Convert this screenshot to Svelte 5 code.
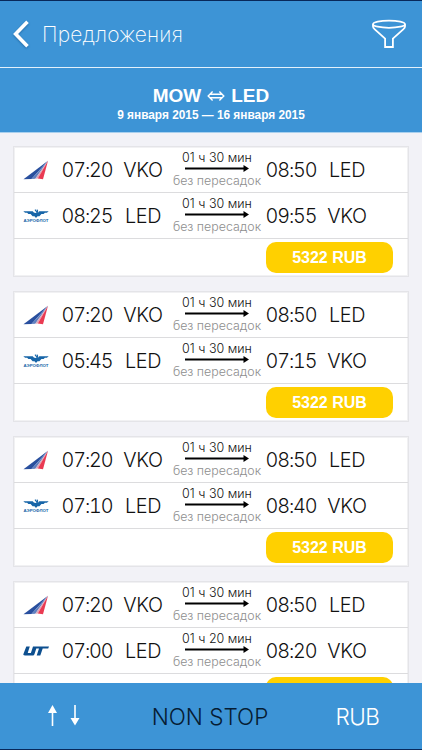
<script lang="ts">
  type Leg = {
    airline: "vnukovo" | "aeroflot" | "utair";
    depart: string;
    from: string;
    arrive: string;
    to: string;
    duration: string;
  };

  const outbound: Leg = {
    airline: "vnukovo",
    depart: "07:20",
    from: "VKO",
    arrive: "08:50",
    to: "LED",
    duration: "01 ч 30 мин"
  };

  function back(airline: Leg["airline"], depart: string, arrive: string, duration = "01 ч 30 мин"): Leg {
    return { airline, depart, from: "LED", arrive, to: "VKO", duration };
  }

  const offers = [
    { price: "5322 RUB", legs: [outbound, back("aeroflot", "08:25", "09:55")] },
    { price: "5322 RUB", legs: [outbound, back("aeroflot", "05:45", "07:15")] },
    { price: "5322 RUB", legs: [outbound, back("aeroflot", "07:10", "08:40")] },
    { price: "5322 RUB", legs: [outbound, back("utair", "07:00", "08:20", "01 ч 20 мин")] }
  ];
</script>

<div class="screen">
  <header class="navbar">
    <button class="back" aria-label="Назад">
      <svg width="16" height="28" viewBox="0 0 16 28">
        <path d="M14.5 1.8 2.6 14l11.9 12.2" fill="none" stroke="#fff" stroke-width="3.6" />
      </svg>
    </button>
    <h1>Предложения</h1>
    <button class="filter" aria-label="Фильтр">
      <svg width="36" height="30" viewBox="0 0 36 30" fill="none" stroke="#fff" stroke-width="1.8">
        <ellipse cx="18" cy="5.2" rx="16" ry="3.6" />
        <path d="M2 5.2v2.3c0 1.2.7 2 1.8 2.9l10.3 9.2V28h7.8v-8.4l10.3-9.2c1.1-.9 1.800-1.700 1.800-2.900V5.200" />
      </svg>
    </button>
  </header>

  <section class="route">
    <div class="cities">
      <span>MOW</span>
      <svg width="18" height="12" viewBox="0 0 18 12" fill="none" stroke="#fff" stroke-width="1.4">
        <path d="M3.2 4.2h11.6M3.2 7.8h11.6M5.6 1.5 1.2 6l4.400 4.500M12.400 1.500 16.800 6l-4.400 4.500" />
      </svg>
      <span>LED</span>
    </div>
    <div class="dates">9 января 2015 — 16 января 2015</div>
  </section>

  <main class="offers">
    {#each offers as offer}
      <article class="offer">
        {#each offer.legs as leg}
          <div class="leg">
            <div class="logo">
              {#if leg.airline === "vnukovo"}
                <svg width="26" height="20" viewBox="0 0 26 20">
                  <path d="M.5 19.2 25 .8 8.500 19z" fill="#294f9e" />
                  <path d="M8.500 19 25 .800 12.300 18.800z" fill="#5f80c0" />
                  <path d="M12.300 18.800 25 .800 14.800 18.600z" fill="#dda5b6" />
                  <path d="M14.800 18.600 25 .800 20 19.200z" fill="#ea3a52" />
                </svg>
              {:else if leg.airline === "aeroflot"}
                <svg width="26" height="14" viewBox="0 0 26 14">
                  <path d="M.3 2.200h9.400L11.300 4h3.400l1.600-1.800h9.400l-1.800 1.600h-2l-1.300 1.300h-2.200L16.400 7.200h-1.900L13 9l-1.500-1.800H9.600L7.600 5.100H5.400L4.100 3.800h-2z" fill="#1765a8" />
                  <path d="M13.800.600a2.100 2.100 0 1 1-2.600 3.400M12 .700l2.600 3.400" fill="none" stroke="#1765a8" stroke-width="1.100" />
                  <text x=".500" y="13" textLength="25" lengthAdjust="spacingAndGlyphs">АЭРОФЛОТ</text>
                </svg>
              {:else}
                <svg width="26" height="10" viewBox="0 0 26 10">
                  <path d="M3.300.500h3.500L4.700 7h3.200L10 .500h16l-.800 2h-5.500L17.300 9.500h-3.600l2.300-7h-2.700L11.500 8c-.400 1-1 1.500-2 1.500H2C.600 9.500 0 8.800.500 7.800z" fill="#0d4f8f" />
                </svg>
              {/if}
            </div>
            <span class="time">{leg.depart}</span>
            <span class="code">{leg.from}</span>
            <div class="flight">
              <span class="duration">{leg.duration}</span>
              <svg width="64" height="7" viewBox="0 0 64 7">
                <path d="M0 3.500h60" stroke="#000" stroke-width="2" />
                <path d="M58.500 0 64 3.500 58.500 7z" />
              </svg>
              <span class="stops">без пересадок</span>
            </div>
            <span class="time">{leg.arrive}</span>
            <span class="code">{leg.to}</span>
          </div>
        {/each}
        <div class="buy">
          <button class="price">{offer.price}</button>
        </div>
      </article>
    {/each}
  </main>

  <footer class="toolbar">
    <button class="sort" aria-label="Сортировка">
      <svg width="32" height="22" viewBox="0 0 32 22" fill="#fff">
        <path d="M4.500 0 9 8H5.300v13H3.700V8H0zM26.200 0h1.600v13h3.700L27 20.500 22.500 13h3.700z" />
      </svg>
    </button>
    <button class="nonstop">NON STOP</button>
    <button class="currency">RUB</button>
  </footer>
</div>

<style>
  :global(body) {
    margin: 0;
    background: #f2f2f7;
  }

  .screen {
    box-sizing: border-box;
    width: 422px;
    height: 750px;
    display: flex;
    flex-direction: column;
    overflow: hidden;
    border-top: 1px solid #08285a;
    border-bottom: 1px solid #08285a;
    background: #f2f2f7;
    font-family: Inter, "Liberation Sans", sans-serif;
    font-weight: 300;
    color: #111;
  }

  button {
    padding: 0;
    border: 0;
    background: none;
    font: inherit;
    color: inherit;
  }

  svg {
    display: block;
  }

  /* Header */
  .navbar {
    flex: none;
    box-sizing: border-box;
    height: 67px;
    display: flex;
    align-items: center;
    padding: 0 15px 0 13px;
    border-bottom: 1px solid #e4f1fb;
    background: #3d94d6;
    color: #fff;
  }

  .back svg {
    filter: drop-shadow(0 1px 1px rgba(0, 50, 100, 0.4));
  }

  h1 {
    flex: 1;
    margin: 0 0 0 13px;
    padding-top: 2px;
    font-size: 21px;
    font-weight: 200;
    line-height: 24px;
    letter-spacing: 0.2px;
  }

  .route {
    flex: none;
    box-sizing: border-box;
    height: 65px;
    padding-top: 17px;
    border-bottom: 1px solid #a9d0ee;
    background: #3d94d6;
    color: #fff;
    font-family: "Liberation Sans", sans-serif;
    font-weight: 700;
    text-align: center;
  }

  .cities {
    display: flex;
    justify-content: center;
    align-items: center;
    gap: 6px;
    font-size: 19px;
    line-height: 22px;
  }

  .dates {
    margin-top: 1px;
    font-size: 11.85px;
    line-height: 14px;
  }

  /* Offers */
  .offers {
    flex: 1;
    min-height: 0;
    display: flex;
    flex-direction: column;
    gap: 14px;
    padding: 13px 13px 0;
    overflow: hidden;
  }

  .offer {
    flex: none;
    box-sizing: border-box;
    height: 131px;
    border: 1px solid #e4e4e8;
    box-shadow: inset 0 0 0 1px #f1f1f3;
    background: #fff;
  }

  .leg {
    box-sizing: border-box;
    height: 46px;
    display: grid;
    grid-template-columns: 44px 58px 54px 94px 54px 58px;
    align-items: center;
    border-bottom: 1px solid #dcdcde;
  }

  .logo {
    padding-left: 9px;
  }

  .logo text {
    font: 700 3.8px "Liberation Sans", sans-serif;
    fill: #1765a8;
  }

  .time,
  .code {
    font-size: 19.8px;
    line-height: 24px;
    text-align: center;
    white-space: nowrap;
  }

  .time {
    font-variant-numeric: tabular-nums;
    letter-spacing: -1.1px;
  }

  .code {
    letter-spacing: -0.4px;
  }

  .flight {
    display: flex;
    flex-direction: column;
    align-items: center;
    white-space: nowrap;
  }

  .duration {
    padding-top: 2px;
    font-size: 12.5px;
    line-height: 14px;
  }

  .stops {
    font-size: 12.4px;
    line-height: 18px;
    color: #8e8e8e;
  }

  .buy {
    display: flex;
    justify-content: flex-end;
    padding: 3px 15px 0 0;
  }

  .price {
    width: 127px;
    height: 31px;
    border-radius: 10px;
    background: #ffd000;
    color: #fff;
    font: 700 16px/32px "Liberation Sans", sans-serif;
  }

  /* Bottom bar */
  .toolbar {
    flex: none;
    height: 66px;
    display: grid;
    grid-template-columns: 127px 166px 129px;
    align-items: center;
    justify-items: center;
    background: #3d94d6;
    font-size: 22.5px;
    letter-spacing: -1px;
  }

  .nonstop {
    color: #061c33;
  }

  .currency {
    color: #fff;
    letter-spacing: -0.5px;
  }
</style>
